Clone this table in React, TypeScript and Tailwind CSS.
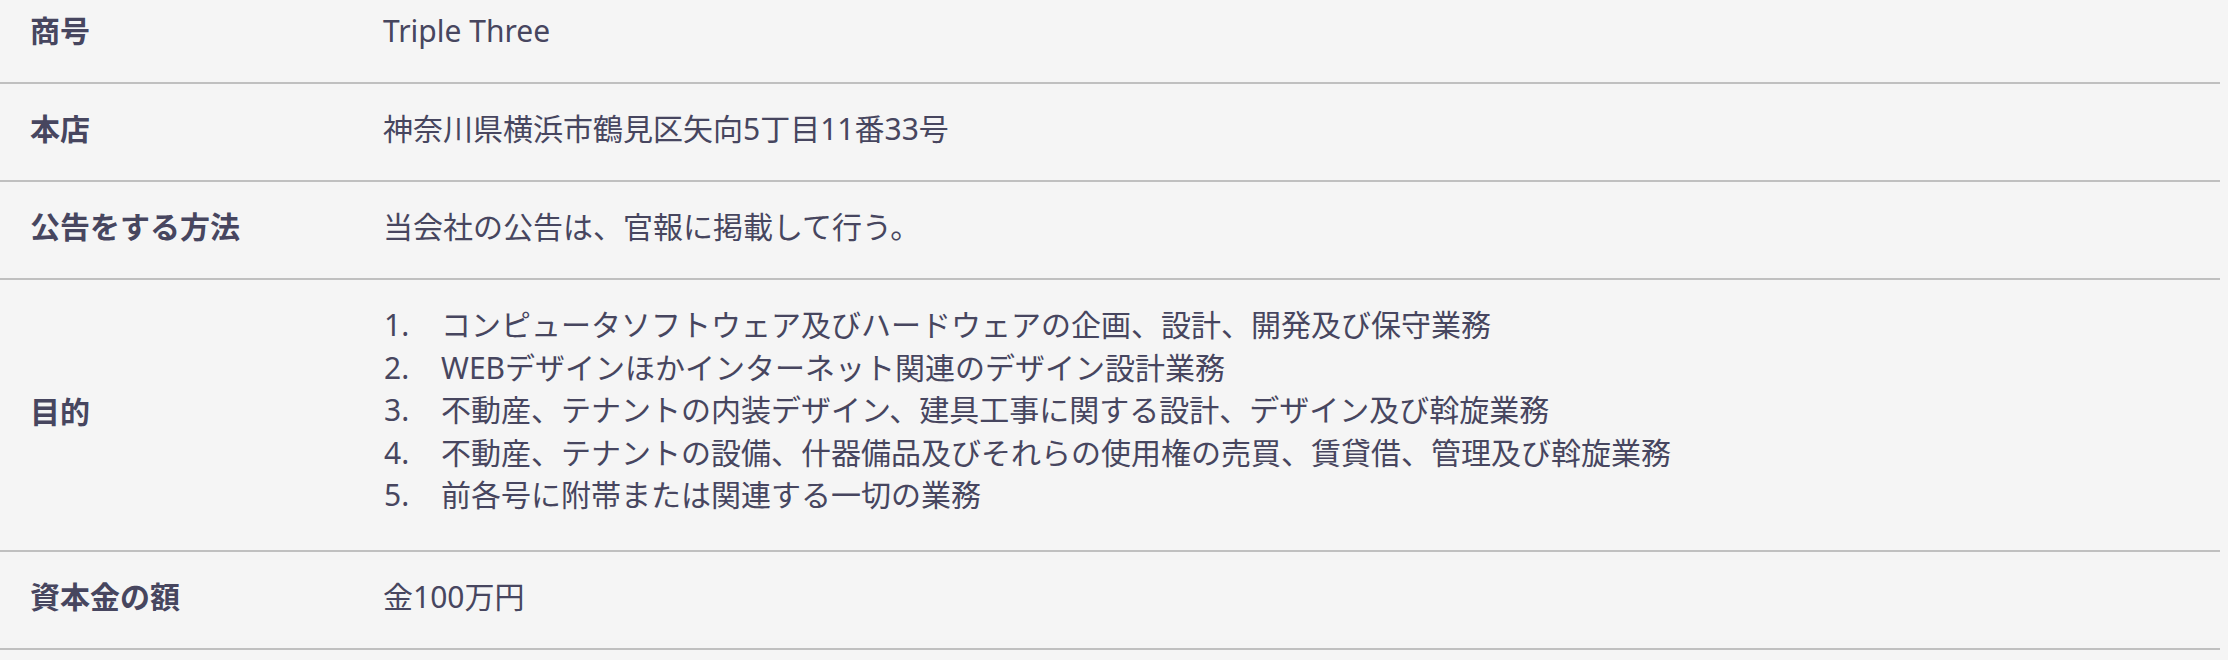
const rows: { label: string; value: string }[] = [
  { label: "商号", value: "Triple Three" },
  { label: "本店", value: "神奈川県横浜市鶴見区矢向5丁目11番33号" },
  { label: "公告をする方法", value: "当会社の公告は、官報に掲載して行う。" },
];

const purposes = [
  "コンピュータソフトウェア及びハードウェアの企画、設計、開発及び保守業務",
  "WEBデザインほかインターネット関連のデザイン設計業務",
  "不動産、テナントの内装デザイン、建具工事に関する設計、デザイン及び斡旋業務",
  "不動産、テナントの設備、什器備品及びそれらの使用権の売買、賃貸借、管理及び斡旋業務",
  "前各号に附帯または関連する一切の業務",
];

function Row({ label, children, first }: { label: string; children: React.ReactNode; first?: boolean }) {
  return (
    <div
      className={`grid grid-cols-[383px_1fr] items-center border-b-2 border-[#c0c0c0] pb-[30px] ${
        first ? "pt-[10px]" : "pt-[24px]"
      }`}
    >
      <div className="pl-[30px] font-bold">{label}</div>
      <div>{children}</div>
    </div>
  );
}

export default function App() {
  return (
    <div
      className="min-h-[660px] w-full bg-[#f5f5f5] text-[30px] leading-[42px] text-[#47465f]"
      style={{ fontFamily: '"Noto Sans", "Noto Sans CJK JP", sans-serif' }}
    >
      <div className="w-[2220px]">
        {rows.map((r, i) => (
          <Row key={r.label} label={r.label} first={i === 0}>
            {r.value}
          </Row>
        ))}
        <Row label="目的">
          <ol className="mb-[3px] leading-[42.5px]">
            {purposes.map((p, i) => (
              <li key={i} className="flex">
                <span className="w-[58px] shrink-0 pl-[1px]">{i + 1}.</span>
                <span>{p}</span>
              </li>
            ))}
          </ol>
        </Row>
        <Row label="資本金の額">金100万円</Row>
      </div>
    </div>
  );
}
